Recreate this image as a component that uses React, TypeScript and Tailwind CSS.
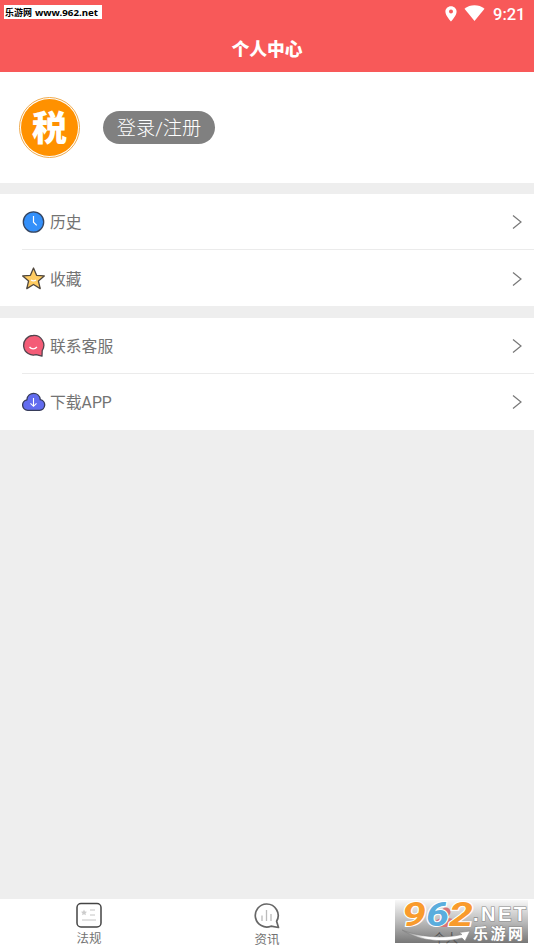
import React from 'react';

const cjk = "font-['Roboto','Noto_Sans_CJK_SC',sans-serif]";

function StatusBar() {
  return (
    <div className="flex h-7 items-start justify-between">
      <div className="ml-1 mt-[5px] flex h-[14px] w-[98px] items-center whitespace-nowrap bg-white text-black">
        <svg width="98" height="14" viewBox="0 0 98 14">
          <text x="1" y="11" fontSize="9" fontWeight="700" fontFamily="Noto Sans CJK SC, sans-serif" textLength="27" lengthAdjust="spacingAndGlyphs">乐游网</text>
          <text x="31" y="11" fontSize="9.500" fontWeight="700" fontFamily="Noto Sans, sans-serif" textLength="63" lengthAdjust="spacingAndGlyphs">www.962.net</text>
        </svg>
      </div>
      <div className="mr-[10px] mt-[5px] flex items-start">
        <svg className="mt-px" width="12" height="16" viewBox="0 0 12 16" fill="white">
          <path fillRule="evenodd" d="M6 0.2C2.8.2.4 2.6.4 5.7.4 9.7 6 15.4 6 15.4s5.600-5.700 5.600-9.700C11.600 2.600 9.200.2 6 .2zM6 3.600a2 2 0 1 1 0 4 2 2 0 0 1 0-4z" />
        </svg>
        <svg className="ml-[7px]" width="21" height="17" viewBox="0 0 21 17" fill="white">
          <path d="M.5 3.800C6.200-.8 14.800-.8 20.500 3.800L10.500 16z" />
        </svg>
        <span className="ml-[8px] w-[31px] text-[16.5px] font-medium leading-[19px] text-white font-['Roboto',sans-serif]">9:21</span>
      </div>
    </div>
  );
}

function ClockIcon() {
  return (
    <svg width="24" height="24" viewBox="0 0 24 24" fill="none">
      <circle cx="11.500" cy="12" r="10.200" fill="#3490fa" stroke="#344562" strokeWidth="1.300" />
      <path d="M11.500 6v6.300l3.200 3.100" stroke="#fff" strokeWidth="1.200" />
    </svg>
  );
}

function StarIcon() {
  return (
    <svg width="24" height="24" viewBox="0.5 0.500 24 24" fill="none">
      <path d="M12 1.500l3.100 7.300 7.700.6-5.900 5.100 1.800 7.600L12 18l-6.700 4.100 1.800-7.600L1.200 9.400l7.700-.6z" fill="#ffcc62" stroke="#51483e" strokeWidth="1.300" strokeLinejoin="round" />
      <path d="M9.500 13.600q2.500 1.600 5 0" stroke="#fff" strokeWidth="1.200" />
    </svg>
  );
}

function ServiceIcon() {
  return (
    <svg width="24" height="24" viewBox="0.5 0.500 24 24" fill="none">
      <path d="M11.700 2a9.800 9.800 0 1 0 3 19.200l5.800 1.400.2-5.500A9.800 9.800 0 0 0 11.700 2z" fill="#f45c77" stroke="#51444d" strokeWidth="1.300" strokeLinejoin="round" />
      <path d="M8 13.500c1.900 2.500 5.400 2.500 7.400 0" stroke="#fff" strokeWidth="1.300" />
    </svg>
  );
}

function CloudIcon() {
  return (
    <svg width="24" height="24" viewBox="0.5 0.500 24 24" fill="none">
      <path d="M6.200 20.800a5.300 5.300 0 0 1-.8-10.500c.6-8.500 12.700-8.500 13.400-.2a5.400 5.400 0 0 1-.7 10.700z" fill="#626cef" stroke="#363b59" strokeWidth="1.300" />
      <path d="M12 8.500v8.300m-3-3 3 3 3-3" stroke="#fff" strokeWidth="1.100" />
    </svg>
  );
}

function Row({ icon, label, divided }: { icon: React.ReactNode; label: string; divided?: boolean }) {
  return (
    <div className="h-[56px] pl-[22px]">
      <div className={`flex h-full items-center border-b ${divided ? 'border-[#ebebeb]' : 'border-transparent'} pr-[12px]`}>
        <span>{icon}</span>
        <span className="ml-[4px] mt-[2px] flex-1 text-[15.800px] text-[#737373]">{label}</span>
        <svg width="10" height="14" viewBox="0 0 10 14" fill="none" stroke="#777" strokeWidth="1.200">
          <path d="M1 .5 9 7l-8 6.500" />
        </svg>
      </div>
    </div>
  );
}

function Watermark() {
  return (
    <svg className="absolute bottom-[6px] right-[6px]" width="133" height="43" viewBox="0 0 133 43" overflow="visible">
      <defs>
        <linearGradient id="plate" x1="0" y1="0" x2="0" y2="1">
          <stop offset="0" stopColor="#f8f8f8" />
          <stop offset=".5" stopColor="#bcbcbc" />
          <stop offset="1" stopColor="#777" />
        </linearGradient>
        <linearGradient id="swoosh" x1="0" x2="1">
          <stop offset="0" stopColor="#777" />
          <stop offset=".35" stopColor="#fff" />
          <stop offset="1" stopColor="#fff" />
        </linearGradient>
      </defs>
      <path fill="url(#plate)" d="M0 0h133v43H0z" />
      <circle cx="51" cy="12" r="4.500" fill="#d5757a" />
      <path d="M40 27v-5q2-4 11-4t9 4v5z" fill="#d5757a" />
      <text x="38" y="43" fontSize="12.500" fill="#555" fontFamily="Noto Sans CJK SC, sans-serif">个人</text>
      <g fontFamily="Roboto, sans-serif" fontSize="32.500" fontWeight="700" fontStyle="italic" stroke="#fff" strokeWidth="2" paintOrder="stroke">
        <text x="7" y="26" fill="#f99b2c" textLength="24" lengthAdjust="spacingAndGlyphs">9</text>
        <text x="31" y="26" fill="#5aaddd" textLength="23" lengthAdjust="spacingAndGlyphs">6</text>
        <text x="54" y="26" fill="#f99b2c" textLength="24" lengthAdjust="spacingAndGlyphs">2</text>
      </g>
      <path d="M7 30C24 37 48 39 67 34.500L64 32.500 75 31 70 41 67 38C45 44 20 39 7 30z" fill="url(#swoosh)" stroke="#858585" strokeWidth=".6" />
      <g fill="#fff" stroke="#888" strokeWidth="1.200" paintOrder="stroke" fontWeight="700">
        <text x="78" y="21" fontSize="20" fontFamily="Liberation Sans, sans-serif" textLength="53">.NET</text>
        <text x="78" y="39" fontSize="15" fontFamily="Noto Sans CJK SC, sans-serif" textLength="50">乐游网</text>
      </g>
    </svg>
  );
}

export default function App() {
  return (
    <div className={`relative flex h-[949px] w-[534px] flex-col overflow-hidden bg-[#eee] ${cjk}`}>
      <header className="h-[72px] bg-[#f85959]">
        <StatusBar />
        <h1 className="text-center text-[17.800px] font-black leading-[43px] text-white">个人中心</h1>
      </header>

      <section className="flex h-[111px] items-center bg-white pl-[19px]">
        <div className="flex size-[61px] items-center justify-center rounded-full border border-[#efaa4d] bg-white">
          <div className="flex size-[57px] items-center justify-center rounded-full bg-[#ff9100]">
            <span className="mt-[3px] text-[35px] font-black leading-none text-white">税</span>
          </div>
        </div>
        <button className="ml-[23px] h-[33px] w-[112px] whitespace-nowrap rounded-full bg-[#808080] text-[19.200px] font-light leading-[36px] text-white">登录/注册</button>
      </section>

      <section className="mt-[11px] h-[112px] bg-white">
        <Row icon={<ClockIcon />} label="历史" divided />
        <div className="mt-px">
          <Row icon={<StarIcon />} label="收藏" />
        </div>
      </section>

      <section className="mt-[12px] h-[112px] bg-white">
        <Row icon={<ServiceIcon />} label="联系客服" divided />
        <Row icon={<CloudIcon />} label="下载APP" />
      </section>

      <nav className="mt-auto grid h-[50px] grid-cols-3 bg-white text-[12.500px] text-[#737373]">
        <div className="flex flex-col items-center pt-[3px]">
          <svg width="26" height="27" viewBox="0 0 26 27" fill="none">
            <rect x="1" y="1.500" width="24" height="23.500" rx="4" stroke="#444" strokeWidth="1.500" />
            <path d="m8 7.500.9 1.900 2.100.3-1.500 1.500.4 2.100L8 12.300l-1.900 1 .4-2.100L5 9.700l2.100-.3z" fill="#ccc" />
            <path d="M14 8h5m-5 5h5M6 18h14" stroke="#c4c4c4" />
          </svg>
          <span className="leading-[20px]">法规</span>
        </div>
        <div className="flex flex-col items-center pt-[3px]">
          <svg width="28" height="27" viewBox="0 0 28 27" fill="none">
            <path d="M13.500 2A11.500 11.500 0 1 0 18 24.200l7.500 1.300-1.900-6.200A11.500 11.500 0 0 0 13.500 2z" stroke="#666" strokeWidth="1.700" strokeLinejoin="round" />
            <path d="M9 13.500v5.500m4.500-11v11m4.500-7v7" stroke="#bbb" strokeWidth="1.300" />
          </svg>
          <span className="leading-[21px]">资讯</span>
        </div>
        <div />
      </nav>
      <Watermark />
    </div>
  );
}
